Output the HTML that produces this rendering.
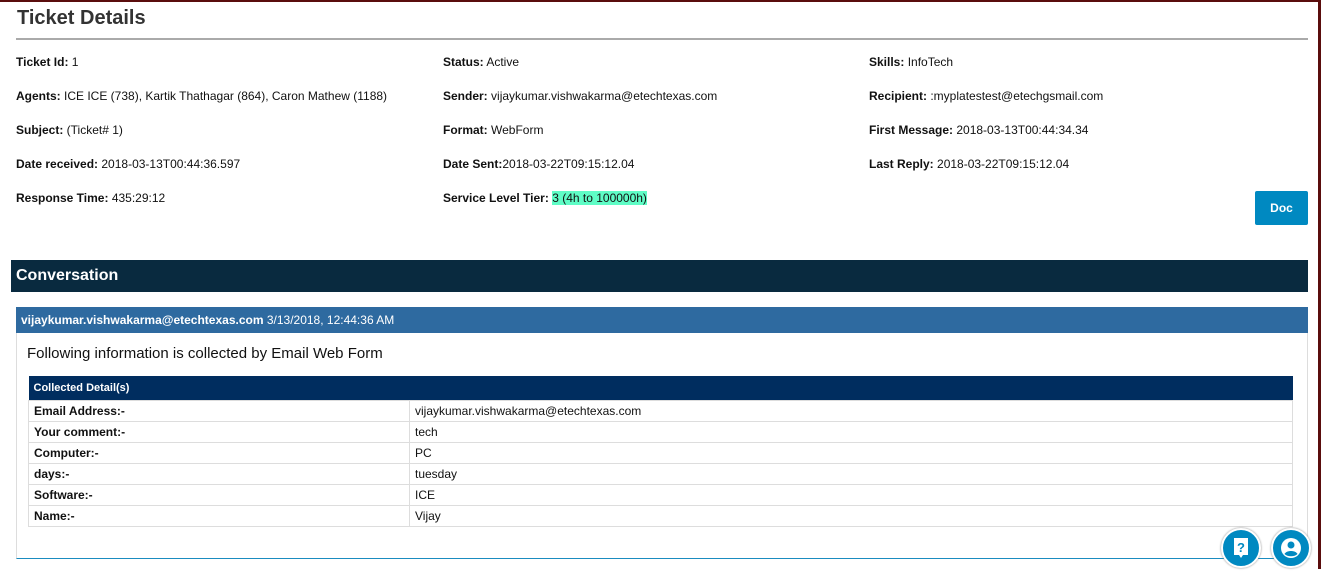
<!DOCTYPE html>
<html><head><meta charset="utf-8"><style>
*{margin:0;padding:0;box-sizing:border-box}
html,body{width:1321px;height:569px;overflow:hidden;background:#fff;font-family:"Liberation Sans",Arial,sans-serif;color:#111}
.frame{position:absolute;left:0;top:0;width:1321px;height:569px;border-top:2px solid #5a0d0d;border-right:3px solid #5a0d0d}
h1{position:absolute;left:17px;top:7px;font-size:20px;font-weight:bold;color:#333}
.hr{position:absolute;left:16px;top:38px;width:1292px;height:2px;background:#aaa}
.f{position:absolute;font-size:12px;white-space:nowrap;color:#111}
.f b{font-weight:bold}
.doc{position:absolute;left:1255px;top:191px;width:53px;height:34px;background:#0089c1;border-radius:2px;color:#fff;font-weight:bold;font-size:12px;text-align:center;line-height:35px}
.conv{position:absolute;left:11px;top:260px;width:1297px;height:32px;background:#092a3f;color:#fff;font-weight:bold;font-size:16px;line-height:32px;padding-left:5px}
.mh{position:absolute;left:16px;top:307px;width:1292px;height:26px;background:#2e6aa0;color:#fff;font-size:12px;line-height:26px;padding-left:5px}
.box{position:absolute;left:16px;top:333px;width:1292px;height:226px;border-left:1px solid #ddd;border-right:1px solid #ddd;border-bottom:1px solid #1a8cc0}
.intro{position:absolute;left:27px;top:345px;font-size:15px;color:#111}
table{position:absolute;left:28px;top:376px;width:1265px;border-collapse:collapse;font-size:12px}
th{background:#002d5f;color:#fff;text-align:left;font-size:11px;height:24px;padding-left:5px}
td{border:1px solid #ddd;height:21px;padding-left:5px;color:#111}
td:first-child{font-weight:bold;width:381px}
.ic{position:absolute;width:40px;height:40px;border-radius:50%;background:#0089c1;border:2px solid #fff;box-shadow:0 0 2px #888}
</style></head><body>
<div class="frame"></div>
<h1>Ticket Details</h1>
<div class="hr"></div>
<div class="f" style="left:16px;top:55px"><b>Ticket Id:</b> 1</div>
<div class="f" style="left:443px;top:55px"><b>Status:</b> Active</div>
<div class="f" style="left:869px;top:55px"><b>Skills:</b> InfoTech</div>
<div class="f" style="left:16px;top:89px"><b>Agents:</b> ICE ICE (738), Kartik Thathagar (864), Caron Mathew (1188)</div>
<div class="f" style="left:443px;top:89px"><b>Sender:</b> vijaykumar.vishwakarma@etechtexas.com</div>
<div class="f" style="left:869px;top:89px"><b>Recipient:</b> :myplatestest@etechgsmail.com</div>
<div class="f" style="left:16px;top:123px"><b>Subject:</b> (Ticket# 1)</div>
<div class="f" style="left:443px;top:123px"><b>Format:</b> WebForm</div>
<div class="f" style="left:869px;top:123px"><b>First Message:</b> 2018-03-13T00:44:34.34</div>
<div class="f" style="left:16px;top:157px"><b>Date received:</b> 2018-03-13T00:44:36.597</div>
<div class="f" style="left:443px;top:157px"><b>Date Sent:</b>2018-03-22T09:15:12.04</div>
<div class="f" style="left:869px;top:157px"><b>Last Reply:</b> 2018-03-22T09:15:12.04</div>
<div class="f" style="left:16px;top:191px"><b>Response Time:</b> 435:29:12</div>
<div class="f" style="left:443px;top:191px"><b>Service Level Tier:</b> <span style="background:#5ffdc6">3 (4h to 100000h)</span></div>
<div class="doc">Doc</div>
<div class="conv">Conversation</div>
<div class="mh"><b>vijaykumar.vishwakarma@etechtexas.com</b> 3/13/2018, 12:44:36 AM</div>
<div class="box"></div>
<div class="intro">Following information is collected by Email Web Form</div>
<table>
<tr><th colspan="2">Collected Detail(s)</th></tr>
<tr><td>Email Address:-</td><td>vijaykumar.vishwakarma@etechtexas.com</td></tr>
<tr><td>Your comment:-</td><td>tech</td></tr>
<tr><td>Computer:-</td><td>PC</td></tr>
<tr><td>days:-</td><td>tuesday</td></tr>
<tr><td>Software:-</td><td>ICE</td></tr>
<tr><td>Name:-</td><td>Vijay</td></tr>
</table>
<div class="ic" style="left:1221px;top:528px"><svg width="36" height="36" viewBox="0 0 36 36"><path d="M11 8h14v17h-5l-2 3-2-3h-5z" fill="#fff"/><text x="18" y="22" text-anchor="middle" font-family="Liberation Sans" font-weight="bold" font-size="13" fill="#0089c1">?</text></svg></div>
<div class="ic" style="left:1271px;top:528px"><svg width="36" height="36" viewBox="0 0 36 36"><circle cx="18" cy="18" r="10" fill="#fff"/><circle cx="18" cy="15" r="3.5" fill="#0089c1"/><path d="M11.5 24c2-4 11-4 13 0c-3 3-10 3-13 0z" fill="#0089c1"/></svg></div>
</body></html>
